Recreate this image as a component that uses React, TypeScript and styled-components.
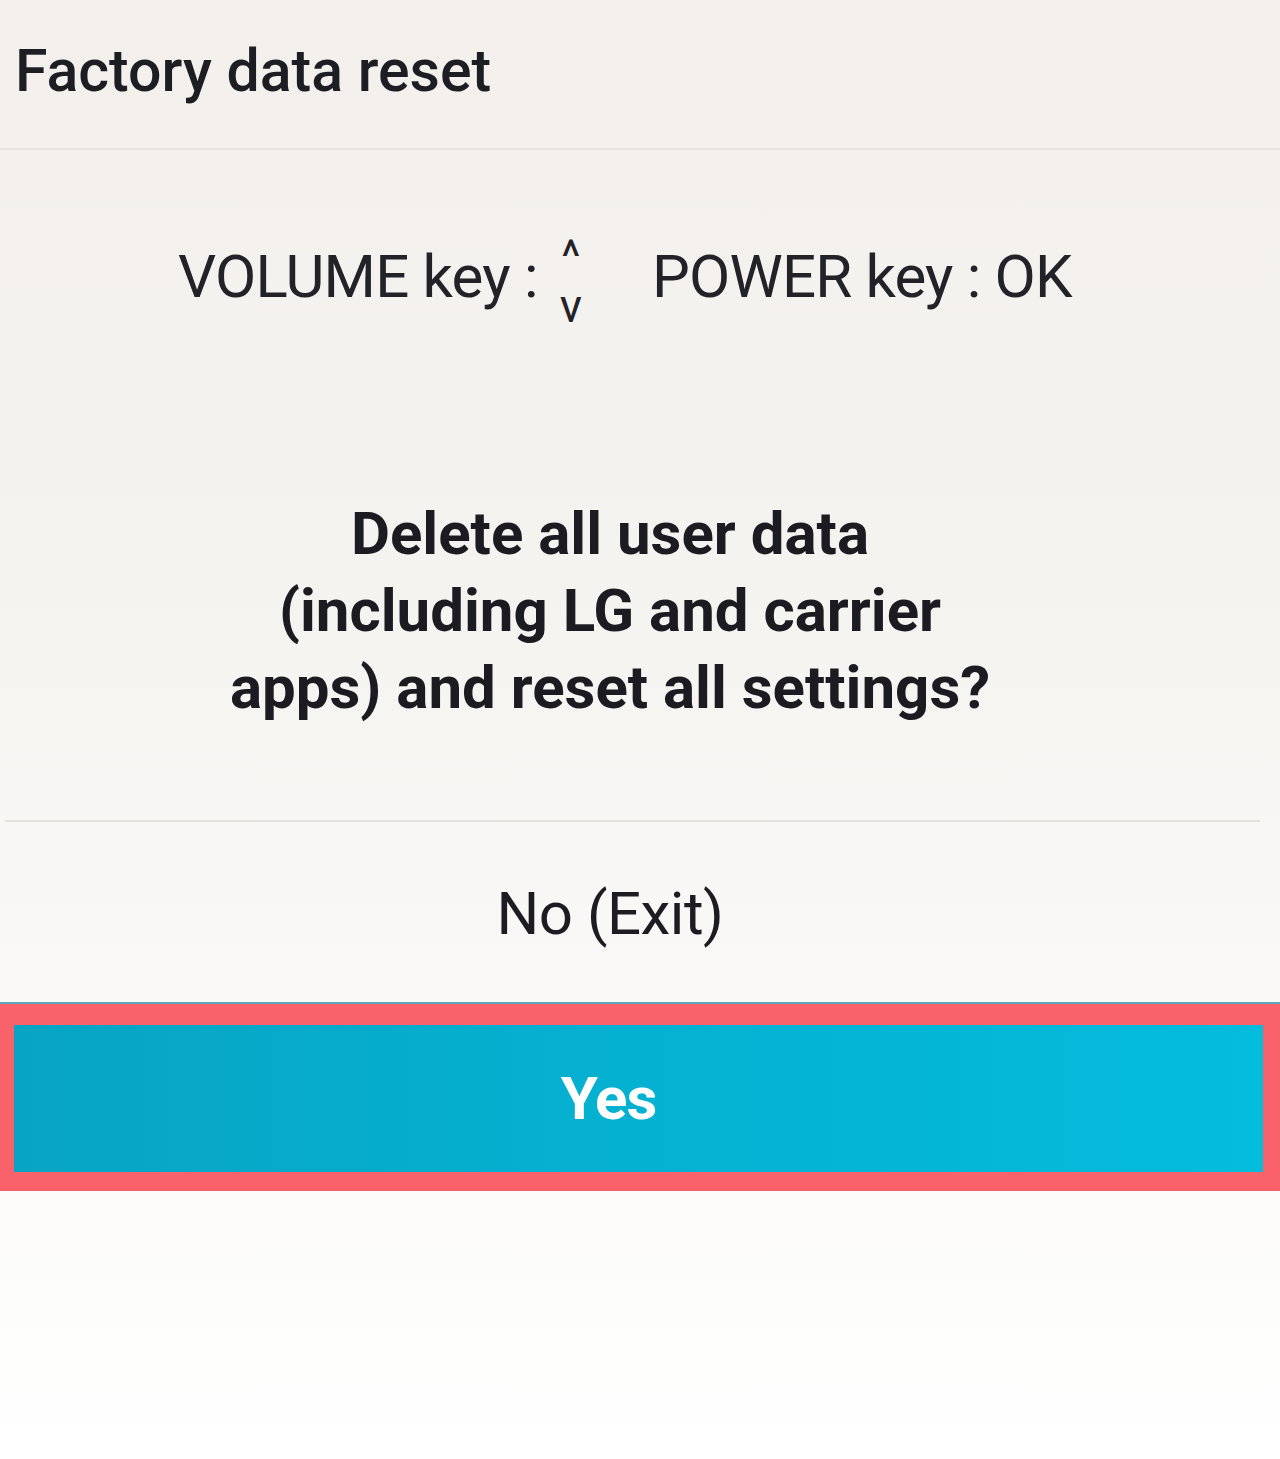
import React from "react";
import styled, { createGlobalStyle } from "styled-components";

const Global = createGlobalStyle`
  html, body { margin: 0; padding: 0; }
  body {
    background: #fbfaf8;
    font-family: Roboto, "Noto Sans", "Liberation Sans", sans-serif;
    color: #1c1c22;
  }
`;

const Screen = styled.div`
  width: 1280px;
  height: 1459px;
  display: flex;
  flex-direction: column;
  background: linear-gradient(180deg, #f3f0ec 0%, #f5f3f0 40%, #faf9f7 68%, #ffffff 100%);
  overflow: hidden;
`;

const Header = styled.div`
  height: 150px;
  padding: 36px 0 0 15px;
  box-sizing: border-box;
  font-size: 59px;
  font-weight: 500;
  color: #1d1d24;
  border-bottom: 2px solid #e7e4e0;
`;

const Body = styled.div`
  height: 670px;
  display: flex;
  flex-direction: column;
  align-items: center;
  border-bottom: 2px solid #e4e2df;
  margin: 0 20px 0 5px;
  padding-right: 45px;
`;

const KeyHint = styled.div`
  height: 100px;
  margin-top: 76px;
  margin-left: 30px;
  display: flex;
  align-items: center;
  font-size: 60px;
  font-weight: 400;
  color: #222228;
  letter-spacing: -0.8px;
`;

const Arrows = styled.span`
  display: inline-flex;
  flex-direction: column;
  align-items: center;
  font-size: 46px;
  line-height: 49px;
  margin: 12px 70px 0 22px;
  letter-spacing: 0;
`;

const Question = styled.div`
  margin-top: 169px;
  text-align: center;
  font-size: 60px;
  line-height: 77px;
  font-weight: 700;
  color: #1b1b21;
`;

const Option = styled.div`
  height: 182px;
  display: flex;
  align-items: center;
  justify-content: center;
  padding-right: 60px;
  font-size: 60px;
  font-weight: 400;
  color: #1c1c22;
  letter-spacing: -0.5px;
`;

const Highlight = styled.div`
  height: 187px;
  box-sizing: border-box;
  border: solid #f9626a;
  border-width: 21px 17px 19px 14px;
  box-shadow: 0 -2px 0 #5aa9bf;
  display: flex;
`;

const YesButton = styled.div`
  flex: 1;
  display: flex;
  align-items: center;
  justify-content: center;
  padding-right: 60px;
  background: linear-gradient(90deg, #08a4c4 0%, #05b0d0 45%, #04bcdc 100%);
  color: #ffffff;
  font-size: 60px;
  font-weight: 700;
  letter-spacing: -1px;
`;

export default function App() {
  return (
    <>
      <Global />
      <Screen>
        <Header>Factory data reset</Header>
        <Body>
          <KeyHint>
            <span>VOLUME key :</span>
            <Arrows>
              <span>^</span>
              <span>v</span>
            </Arrows>
            <span>POWER key : OK</span>
          </KeyHint>
          <Question>
            Delete all user data
            <br />
            (including LG and carrier
            <br />
            apps) and reset all settings?
          </Question>
        </Body>
        <Option>No (Exit)</Option>
        <Highlight>
          <YesButton>Yes</YesButton>
        </Highlight>
      </Screen>
    </>
  );
}
